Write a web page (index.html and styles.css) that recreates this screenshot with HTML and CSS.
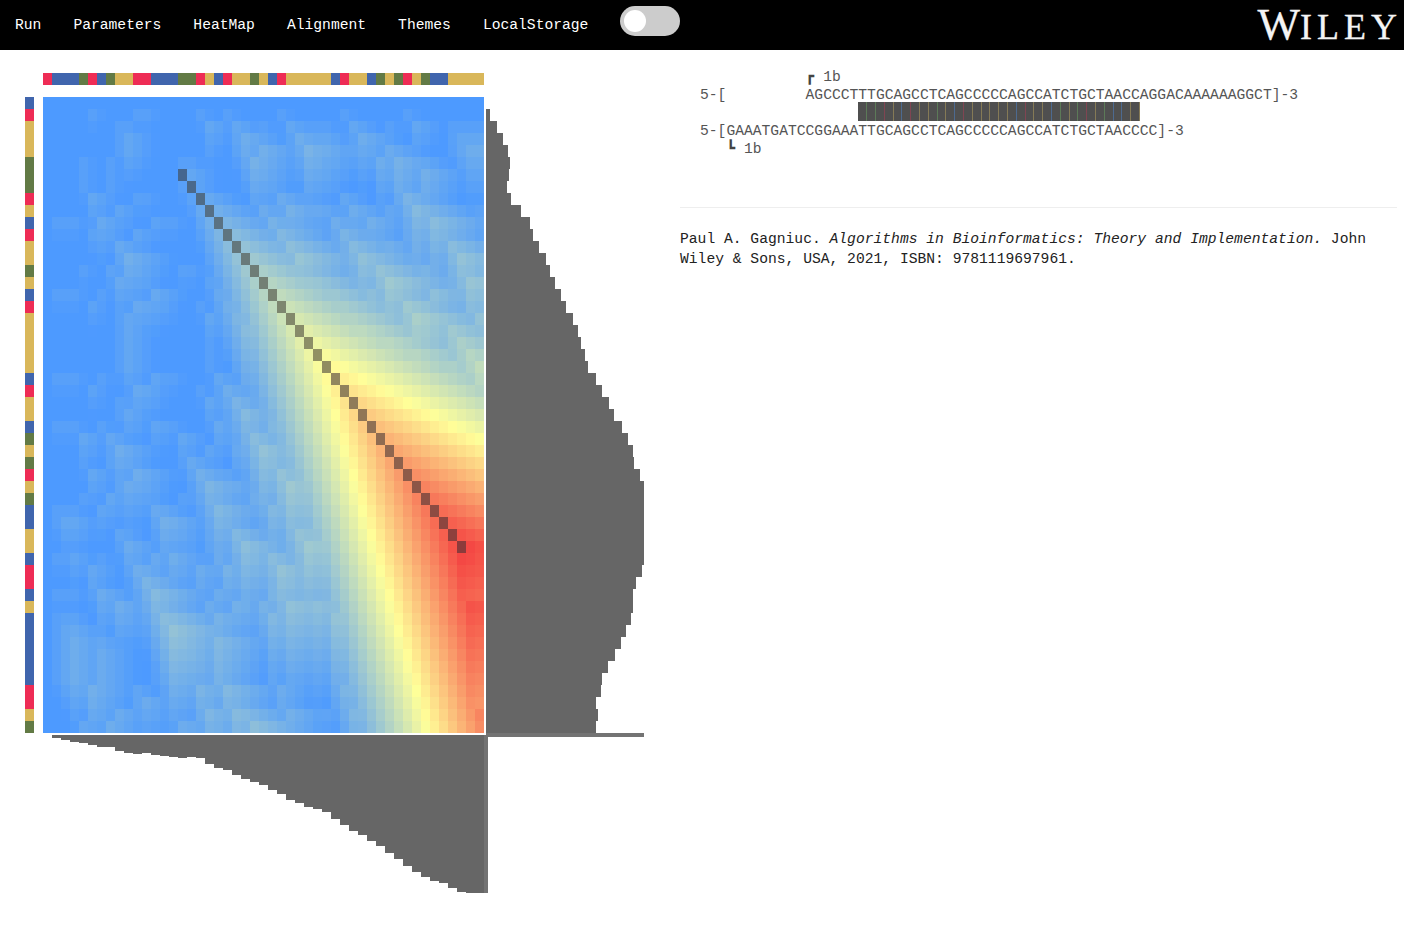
FILE: index.html
```html
<!DOCTYPE html>
<html lang="en">
<head>
    <meta charset="UTF-8">
    <meta name="viewport" content="width=device-width, initial-scale=1.0">
    <title>Local Alignment</title>
    <link rel="stylesheet" href="styles.css">
</head>
<body>
    <nav class="topbar">
        <a href="#">Run</a>
        <a href="#">Parameters</a>
        <a href="#">HeatMap</a>
        <a href="#">Alignment</a>
        <a href="#">Themes</a>
        <a href="#">LocalStorage</a>
        <span class="switch"><span class="knob"></span></span>
        <span class="logo"><span class="logo-w">W</span>ILEY</span>
    </nav>

    <main class="content">
        <div class="plot">
            <div class="seq-top" id="seqTop"></div>
            <div class="seq-left" id="seqLeft"></div>
            <div class="heat" id="heat"></div>
            <div class="hist-right" id="histRight"></div>
            <div class="hist-bottom" id="histBottom"></div>
        </div>

        <section class="report">
            <div class="align">
                <div class="line">            <b>┏</b> 1b</div>
                <div class="line">5-[         AGCCCTTTGCAGCCTCAGCCCCCAGCCATCTGCTAACCAGGACAAAAAAGGCT]-3</div>
                <div class="match" id="match"></div>
                <div class="line">5-[GAAATGATCCGGAAATTGCAGCCTCAGCCCCCAGCCATCTGCTAACCCC]-3</div>
                <div class="line">   <b>┗</b> 1b</div>
            </div>
            <hr>
            <p class="cite">Paul A. Gagniuc. <em>Algorithms in Bioinformatics: Theory and Implementation.</em> John<br>Wiley &amp; Sons, USA, 2021, ISBN: 9781119697961.</p>
        </section>
    </main>

    <script src="script.js"></script>
</body>
</html>
```

FILE: styles.css
```css
body {
    margin: 0;
    background-color: #fff;
    font-family: 'Liberation Mono', monospace;
    font-size: 14.67px;
}

.topbar {
    display: flex;
    align-items: center;
    gap: 32px;
    height: 50px;
    padding-left: 15px;
    background-color: #000;
}

.topbar a {
    color: #fff;
    text-decoration: none;
}

.switch {
    display: block;
    width: 60px;
    height: 30px;
    margin-top: -8px;
    padding: 4px;
    box-sizing: border-box;
    background-color: #ccc;
    border-radius: 15px;
}

.knob {
    display: block;
    width: 22px;
    height: 22px;
    background-color: #fff;
    border-radius: 50%;
}

.logo {
    margin-left: auto;
    padding-right: 2px;
    font-family: 'Liberation Serif', serif;
    font-size: 36px;
    letter-spacing: 5px;
    line-height: 50px;
    color: #f4f4f4;
    -webkit-text-stroke: 0.3px #f4f4f4;
    white-space: nowrap;
}

.logo-w {
    font-size: 45px;
    letter-spacing: 0;
}

.content {
    display: flex;
    gap: 36px;
    padding: 23px 7px 0 25px;
}

.plot {
    display: grid;
    flex: none;
    grid-template-columns: 9px 9px 441px 2px 158px;
    grid-template-rows: 12px 12px 636px 2px 158px;
}

.seq-top {
    grid-column: 3;
    grid-row: 1;
    display: flex;
}

.seq-left {
    grid-column: 1;
    grid-row: 3;
    display: flex;
    flex-direction: column;
}

.seq-top div {
    width: 9px;
}

.seq-left div {
    height: 12px;
}

.base-A { background-color: #4065ad; }
.base-C { background-color: #d9b75a; }
.base-G { background-color: #ee2c55; }
.base-T { background-color: #627a45; }

.heat {
    grid-column: 3;
    grid-row: 3;
    display: grid;
    grid-template-columns: repeat(49, 9px);
    grid-auto-rows: 12px;
}

.cell.path {
    box-shadow: inset 0 0 0 9px rgba(55, 55, 55, 0.55);
}

.hist-right {
    grid-column: 5;
    grid-row: 3 / span 2;
    display: flex;
    flex-direction: column;
    align-self: start;
}

.hist-right div {
    height: 12px;
    background-color: #666;
}

.hist-right .baseline {
    flex: none;
    width: 158px;
    height: 4px;
    background-color: #737373;
}

.hist-bottom {
    grid-column: 3 / span 3;
    grid-row: 5;
    display: flex;
    align-items: flex-start;
}

.hist-bottom div {
    flex: none;
    width: 9px;
    background-color: #666;
}

.hist-bottom .stem {
    width: 4px;
    height: 158px;
    background-color: #737373;
}

.report {
    flex: 1;
    min-width: 0;
    margin-top: -5px;
}

.align {
    padding-left: 20px;
    color: #555;
    line-height: 18px;
}

.align b {
    color: #444;
}

.line {
    height: 18px;
    white-space: pre;
}

.match {
    display: flex;
    height: 19px;
    margin: -2px 0 1px 158.4px;
}

.match span {
    width: 8.8px;
    border-right: 1px solid;
    box-sizing: border-box;
}

.match .base-A { border-color: #4d6a90; background-color: #4f4f4f; }
.match .base-C { border-color: #857a56; background-color: #4f4f4f; }
.match .base-G { border-color: #804552; background-color: #4f4f4f; }
.match .base-T { border-color: #5c7a58; background-color: #4f4f4f; }

hr {
    height: 1px;
    margin: 49px 0 0;
    border: none;
    background-color: #eee;
}

.cite {
    margin: 21px 0 0;
    color: #222;
    line-height: 20px;
}
```

FILE: script.js
```js
const seqTop = 'GAAATGATCCGGAAATTGCAGCCTCAGCCCCCAGCCATCTGCTAACCCC';
const seqLeft = 'AGCCCTTTGCAGCCTCAGCCCCCAGCCATCTGCTAACCAGGACAAAAAAGGCT';

// Right and bottom projections, in pixels
const rowBars = [0, 3.7, 11.3, 17, 22, 24, 23, 20.7, 25, 35, 44, 46.7, 53, 60, 64, 69, 75, 80, 87, 92, 95, 99, 102, 110, 116, 122.7,
    128, 136, 141.7, 146.7, 148, 154, 158, 158, 158, 158, 158, 158, 158, 156, 150, 147, 147, 145, 140, 135, 129, 122, 116, 114.7, 110, 112, 109.7];
const colBars = [0, 3.3, 5.3, 7.3, 8.3, 10.3, 11.7, 11.7, 15.7, 18, 19, 18, 20, 21, 22.3, 23, 22, 23, 28.7, 33, 35, 40, 44, 47, 50,
    55, 59, 64.7, 68, 72, 74, 77, 84, 90, 96, 100, 106, 111, 118, 124, 130.7, 137, 142, 146, 148, 153, 157, 158, 158];

const matchScore = 1;
const mismatchScore = -1;
const gapScore = -0.65;

function buildBases(target, seq) {
    for (const base of seq) {
        const el = document.createElement('div');
        el.className = 'base-' + base;
        target.appendChild(el);
    }
}

function scoreMatrix() {
    const m = [];
    let max = 0;
    for (let i = 0; i < seqLeft.length; i++) {
        m.push(new Array(seqTop.length).fill(0));
        if (i === 0) continue;
        for (let j = 1; j < seqTop.length; j++) {
            const s = seqLeft[i] === seqTop[j] ? matchScore : mismatchScore;
            m[i][j] = Math.max(0, m[i - 1][j - 1] + s, m[i - 1][j] + gapScore, m[i][j - 1] + gapScore);
            if (m[i][j] > max) max = m[i][j];
        }
    }
    return { m, max };
}

function heatColor(t) {
    const low = [77, 154, 255], mid = [255, 255, 153], high = [244, 64, 64];
    const a = t < 0.5 ? low : mid;
    const b = t < 0.5 ? mid : high;
    const k = t < 0.5 ? t * 2 : (t - 0.5) * 2;
    const c = a.map((v, n) => Math.round(v + (b[n] - v) * k));
    return `rgb(${c[0]}, ${c[1]}, ${c[2]})`;
}

function buildHeat() {
    const heat = document.getElementById('heat');
    const { m, max } = scoreMatrix();
    m.forEach((row, i) => {
        row.forEach((v, j) => {
            const cell = document.createElement('div');
            cell.className = 'cell';
            if (i - j === -9 && i >= 6 && i <= 37) cell.classList.add('path');
            cell.style.backgroundColor = heatColor(v / max);
            heat.appendChild(cell);
        });
    });
}

function buildHistograms() {
    const right = document.getElementById('histRight');
    rowBars.forEach(w => {
        const bar = document.createElement('div');
        bar.style.width = w + 'px';
        right.appendChild(bar);
    });
    const base = document.createElement('div');
    base.className = 'baseline';
    right.appendChild(base);

    const bottom = document.getElementById('histBottom');
    colBars.forEach(h => {
        const bar = document.createElement('div');
        bar.style.height = h + 'px';
        bottom.appendChild(bar);
    });
    const stem = document.createElement('div');
    stem.className = 'stem';
    bottom.appendChild(stem);
}

function buildMatch() {
    const match = document.getElementById('match');
    for (const base of seqTop.slice(15, 47)) {
        const el = document.createElement('span');
        el.className = 'base-' + base;
        match.appendChild(el);
    }
}

buildBases(document.getElementById('seqTop'), seqTop);
buildBases(document.getElementById('seqLeft'), seqLeft);
buildHeat();
buildHistograms();
buildMatch();
```
